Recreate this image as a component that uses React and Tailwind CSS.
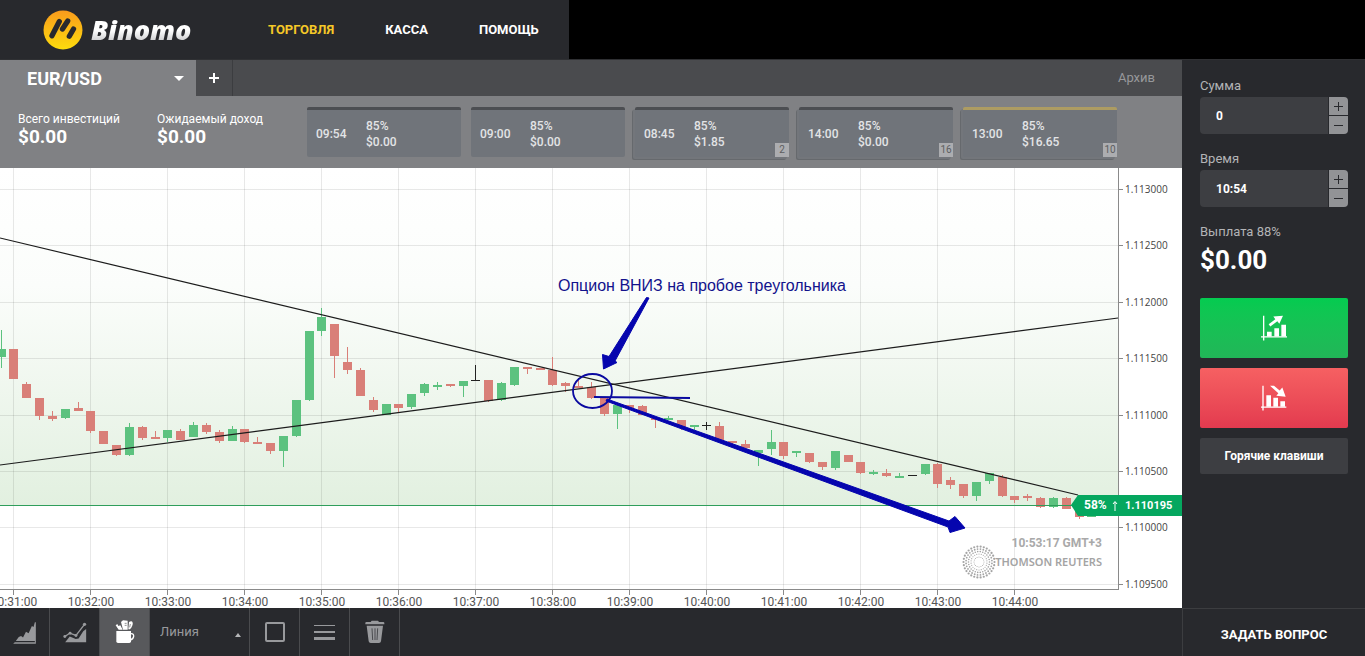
import React, { useState } from 'react';
import clsx from 'clsx';

const NAV = ['Торговля', 'Касса', 'Помощь'];

const DEALS = [
  { time: '09:54', rate: '85%', sum: '$0.00' },
  { time: '09:00', rate: '85%', sum: '$0.00' },
  { time: '08:45', rate: '85%', sum: '$1.85', count: 2 },
  { time: '14:00', rate: '85%', sum: '$0.00', count: 16 },
  { time: '13:00', rate: '85%', sum: '$16.65', count: 10, highlighted: true }
];

// [direction, body top, body bottom, wick top, wick bottom], one entry per 10 seconds
const CANDLES = [
  ['up', 349, 357, 330, 368],
  ['down', 349, 379, 349, 379],
  ['down', 384, 398, 382, 398],
  ['down', 398, 416, 398, 420],
  ['down', 416, 419, 411, 421],
  ['up', 409, 418, 409, 419],
  ['down', 408, 411, 402, 411],
  ['down', 411, 431, 411, 433],
  ['down', 431, 444, 431, 444],
  ['down', 445, 455, 445, 456],
  ['up', 427, 455, 423, 456],
  ['down', 427, 438, 426, 440],
  ['down', 437, 439, 431, 439],
  ['up', 430, 438, 430, 442],
  ['down', 431, 440, 429, 440],
  ['up', 425, 437, 422, 437],
  ['down', 425, 432, 423, 434],
  ['down', 432, 441, 430, 443],
  ['up', 429, 441, 426, 441],
  ['down', 429, 442, 429, 443],
  ['down', 442, 444, 437, 444],
  ['down', 443, 451, 443, 454],
  ['up', 436, 451, 436, 467],
  ['up', 400, 436, 400, 437],
  ['up', 331, 400, 331, 401],
  ['up', 317, 331, 308, 336],
  ['down', 324, 356, 324, 378],
  ['down', 362, 370, 347, 374],
  ['down', 370, 396, 368, 396],
  ['down', 400, 410, 397, 412],
  ['up', 404, 415, 404, 415],
  ['down', 404, 408, 404, 412],
  ['up', 394, 407, 394, 409],
  ['up', 384, 393, 383, 396],
  ['up', 385, 387, 382, 390],
  ['down', 384, 386, 384, 387],
  ['up', 381, 386, 381, 397],
  ['flat', 380, 381, 365, 381],
  ['down', 380, 401, 380, 402],
  ['up', 383, 400, 382, 401],
  ['up', 367, 385, 367, 386],
  ['down', 367, 369, 367, 374],
  ['down', 368, 370, 368, 370],
  ['down', 370, 385, 357, 386],
  ['down', 383, 386, 382, 392],
  ['down', 386, 388, 378, 388],
  ['down', 387, 398, 382, 399],
  ['down', 398, 414, 398, 416],
  ['up', 405, 414, 405, 429],
  ['down', 405, 408, 405, 413],
  ['down', 406, 415, 405, 415],
  ['down', 418, 420, 418, 428],
  ['up', 418, 420, 416, 420],
  ['down', 420, 427, 420, 430],
  ['up', 425, 427, 425, 430],
  ['flat', 425, 426, 422, 430],
  ['down', 426, 441, 422, 441],
  ['down', 441, 443, 441, 448],
  ['down', 444, 448, 440, 448],
  ['up', 450, 453, 450, 466],
  ['up', 442, 449, 430, 455],
  ['down', 442, 456, 442, 459],
  ['up', 451, 453, 451, 457],
  ['down', 453, 462, 453, 463],
  ['down', 462, 467, 462, 470],
  ['up', 451, 468, 451, 470],
  ['down', 455, 462, 455, 462],
  ['down', 462, 473, 462, 474],
  ['up', 472, 474, 470, 475],
  ['down', 473, 476, 469, 477],
  ['up', 476, 478, 473, 478],
  ['flat', 475, 476, 475, 476],
  ['up', 464, 474, 464, 475],
  ['down', 464, 484, 463, 488],
  ['down', 480, 485, 477, 489],
  ['down', 484, 496, 484, 498],
  ['up', 482, 496, 482, 501],
  ['up', 473, 481, 473, 484],
  ['down', 477, 496, 475, 497],
  ['down', 496, 500, 496, 503],
  ['down', 496, 498, 494, 501],
  ['down', 498, 507, 497, 508],
  ['up', 498, 507, 497, 508],
  ['down', 498, 509, 497, 509],
  ['down', 509, 517, 509, 519],
  ['up', 515, 517, 515, 517]
];

const CANDLE_COLORS = { up: '#5cc27f', down: '#d97f78', flat: '#222222' };

const PRICES = [
  ['1.113000', 189],
  ['1.112500', 245],
  ['1.112000', 302],
  ['1.111500', 358],
  ['1.111000', 415],
  ['1.110500', 471],
  ['1.110000', 527],
  ['1.109500', 584]
];

const TIMES = [
  '10:31:00', '10:32:00', '10:33:00', '10:34:00', '10:35:00', '10:36:00', '10:37:00',
  '10:38:00', '10:39:00', '10:40:00', '10:41:00', '10:42:00', '10:43:00', '10:44:00'
];

const Logo = () => (
  <a href="#" className="flex items-center gap-2">
    <svg viewBox="44 11 38 38" className="size-10" aria-hidden="true">
      <defs>
        <linearGradient id="coin" x1="0" y1="0" x2="0" y2="1">
          <stop offset="0" stopColor="#f99b1c" />
          <stop offset="1" stopColor="#fddc0d" />
        </linearGradient>
      </defs>
      <circle cx="63" cy="30" r="18.5" fill="url(#coin)" />
      <g stroke="#28292d" strokeWidth="5" strokeLinecap="round">
        <path d="M52.500 35.500L59.500 22" />
        <path d="M62.500 29L67.500 21.500" />
        <path d="M69 36L73 29" />
      </g>
    </svg>
    <span className="bg-linear-to-b from-white from-50% to-[#b9babd] bg-clip-text pr-1 font-['Open_Sans',sans-serif] text-[27px] leading-8 font-extrabold text-transparent italic">
      Binomo
    </span>
  </a>
);

const Header = () => (
  <header className="flex h-15 border-b border-[#2f3033] bg-black">
    <div className="flex w-[569px] items-center bg-[#28292d] pl-[43px]">
      <div className="w-[225px]">
        <Logo />
      </div>
      <nav className="flex gap-[51px] text-[13px] font-bold text-white uppercase">
        {NAV.map((item, i) => (
          <a key={item} href="#" className={clsx(i === 0 && 'text-[#f5c827]')}>{item}</a>
        ))}
      </nav>
    </div>
  </header>
);

const AssetTabs = () => (
  <div className="flex h-9 items-stretch bg-[#4a4b4e] text-white">
    <button className="flex w-[196px] items-center justify-between bg-[#808184] pr-3 pl-[27px] text-[18px] font-bold">
      EUR/USD
      <svg viewBox="0 0 10 5" className="h-[5px] w-2.5" fill="currentColor" aria-hidden="true">
        <path d="M0 0h10L5 5z" />
      </svg>
    </button>
    <button aria-label="Добавить актив" className="flex w-[37px] items-center justify-center border-r border-[#3c3d40]">
      <svg viewBox="0 0 10 10" className="size-2.5" stroke="currentColor" strokeWidth="2" aria-hidden="true">
        <path d="M5 0v10M0 5h10" />
      </svg>
    </button>
    <a href="#" className="ml-auto self-center pr-[27px] text-[13px] text-[#97989b]">Архив</a>
  </div>
);

const Stat = ({ label, value }) => (
  <div>
    <div className="text-[12px] leading-4">{label}</div>
    <div className="text-[19px] leading-5 font-bold">{value}</div>
  </div>
);

const DealCard = ({ deal }) => (
  <button
    className={clsx(
      'relative flex h-[50px] flex-1 items-center rounded-xs border-t-3 bg-[#70747a] pl-[9px] text-left text-[12px] font-medium text-[#e3e4e6]',
      deal.highlighted ? 'border-[#ad9c62]' : 'border-[#4c4e52]',
      deal.count && 'shadow-[-2px_2px_0_#73767b,-3px_3px_0_#66696d]'
    )}
  >
    <span className="w-[50px]">{deal.time}</span>
    <span className="leading-4">
      {deal.rate}
      <br />
      {deal.sum}
    </span>
    {deal.count && (
      <span className="absolute right-0 bottom-0 h-3.5 min-w-3.5 bg-[#acadb0] px-px text-center text-[10px] leading-3.5 font-normal text-[#5c5d60]">
        {deal.count}
      </span>
    )}
  </button>
);

const StatsPanel = () => (
  <div className="flex h-[72px] items-start bg-[#808184] pt-[11px] pr-[65px] text-white">
    <div className="flex w-[307px] shrink-0 pt-1 pl-[18px]">
      <div className="w-[139px]">
        <Stat label="Всего инвестиций" value="$0.00" />
      </div>
      <Stat label="Ожидаемый доход" value="$0.00" />
    </div>
    <div className="flex flex-1 gap-2.5">
      {DEALS.map((deal) => (
        <DealCard key={deal.time} deal={deal} />
      ))}
    </div>
  </div>
);

const Candle = ({ candle, index }) => {
  const [kind, top, bottom, high, low] = candle;
  const x = Math.round(0.5 + (index * 77) / 6);
  const color = CANDLE_COLORS[kind];
  return (
    <g fill={color}>
      <rect x={x} y={high} width="1" height={low - high} />
      <rect x={x - 4} y={top} width="9" height={bottom - top} />
    </g>
  );
};

// Rings of dots that grow towards the outside
const DottedSun = () => {
  const rings = [[5, 16, 0.5], [8, 22, 0.6], [10.5, 26, 0.8], [13, 28, 0.9], [15.5, 30, 1.1]];
  return (
    <g fill="#a4a4a4">
      {rings.map(([r, n, size], ring) =>
        Array.from({ length: n }, (_, i) => {
          const a = ((i + (ring % 2) / 2) / n) * Math.PI * 2;
          return <circle key={`${r}-${i}`} cx={979 + r * Math.cos(a)} cy={562 + r * Math.sin(a)} r={size} />;
        })
      )}
    </g>
  );
};

const Chart = () => (
  <svg viewBox="0 168 1182 440" className="block w-full bg-white" role="img" aria-label="EUR/USD">
    <defs>
      <linearGradient id="area" x1="0" y1="0" x2="0" y2="1">
        <stop offset="0" stopColor="#ffffff" />
        <stop offset="0.35" stopColor="#fbfdfb" />
        <stop offset="1" stopColor="#e2f0e0" />
      </linearGradient>
    </defs>
    <rect x="0" y="168" width="1118" height="337" fill="url(#area)" />

    <g fill="#000000" fillOpacity="0.09">
      {PRICES.map(([price, y]) => (
        <rect key={price} x="0" y={y} width="1118" height="1" />
      ))}
      {TIMES.map((time, i) => (
        <rect key={time} x={13 + i * 77} y="168" width="1" height="421" />
      ))}
    </g>

    <g fill="#8a8a8a">
      <rect x="1118" y="168" width="1" height="422" />
      <rect x="0" y="589" width="1119" height="1" />
      {PRICES.map(([price, y]) => (
        <rect key={price} x="1118" y={y} width="5" height="1" />
      ))}
      {TIMES.map((time, i) => (
        <rect key={time} x={13 + i * 77} y="590" width="1" height="5" />
      ))}
    </g>
    <g className="font-['Open_Sans',sans-serif] text-[10px]" fill="#444444">
      {PRICES.map(([price, y]) => (
        <text key={price} x="1125" y={y + 4}>{price}</text>
      ))}
    </g>
    <g className="text-[12px]" fill="#555555" textAnchor="middle">
      {TIMES.map((time, i) => (
        <text key={time} x={14 + i * 77} y="606">{time}</text>
      ))}
    </g>

    {CANDLES.map((candle, i) => (
      <Candle key={i} candle={candle} index={i} />
    ))}
    <rect x="0" y="505" width="1075" height="1" fill="#2f9e5b" />

    <g stroke="#1c1c1c" strokeWidth="1.2">
      <path d="M0 238L1078 495" />
      <path d="M0 465L1118 318" />
    </g>

    {/* Price tag */}
    <path d="M1071 505l7-10h104v21h-104z" fill="#05a75f" />
    <g fill="#ffffff" className="font-bold">
      <text x="1084" y="509" className="text-[12px]">58%</text>
      <path d="M1115 511v-9M1113 504l2-2.500l2 2.500" fill="none" stroke="#ffffff" />
      <text x="1125" y="509" className="text-[11px]">1.110195</text>
    </g>

    {/* Data source */}
    <text x="1102" y="547" textAnchor="end" fill="#a9a9a9" className="text-[12px] font-bold">10:53:17 GMT+3</text>
    <DottedSun />
    <text x="1102" y="566" textAnchor="end" fill="#a4a4a4" className="font-['Noto_Sans',sans-serif] text-[11px] font-semibold">
      THOMSON REUTERS
    </text>

    {/* Hand-drawn notes */}
    <text x="558" y="291" fill="#12128c" className="font-['Liberation_Sans',sans-serif] text-[16px]">
      Опцион ВНИЗ на пробое треугольника
    </text>
    <g fill="none" stroke="#0a0aa0">
      <ellipse cx="592.500" cy="391" rx="19.500" ry="17" strokeWidth="1.800" />
      <path d="M594 397L690 398" strokeWidth="2" />
    </g>
    <g fill="#0505ae" stroke="#0505ae" strokeLinejoin="round">
      <path d="M646.500 297.500L649 298L615 361L617 362.500L603.500 369L602.500 354.500L609 356.500z" />
      <path d="M607 399L949 521L955 516.500L965 528L950 532.500L948 527L606 401z" />
    </g>
  </svg>
);

const ToolButton = ({ label, active, children }) => (
  <button
    aria-label={label}
    className={clsx(
      'flex w-[50px] items-center justify-center border-r border-[#4a4b4e]',
      active ? 'bg-[#58595c] text-white' : 'text-[#98999c]'
    )}
  >
    {children}
  </button>
);

const Toolbar = () => (
  <div className="flex h-12 shrink-0 items-stretch bg-[#28292d]">
    <ToolButton label="Тип графика">
      <svg viewBox="38 126 72 70" className="h-[23px] w-6" fill="currentColor" aria-hidden="true">
        <path d="M46 187l9-12 7-3 6 4 9-17 8 4 10-22 5 3 4-14h3v65H38l5-4h61v-4z" />
      </svg>
    </ToolButton>
    <ToolButton label="Индикаторы">
      <svg viewBox="188 130 72 64" className="h-[21px] w-6" fill="currentColor" aria-hidden="true">
        <path d="M193 174l15-10 19 7 26-34" fill="none" stroke="currentColor" strokeWidth="4" />
        <circle cx="193" cy="174" r="4.500" />
        <circle cx="209" cy="164" r="4.500" />
        <circle cx="227" cy="171" r="4.500" />
        <circle cx="253" cy="137" r="5" />
        <path d="M194 192l14-18 18 8 9-2 14-22 9-7v41z" />
      </svg>
    </ToolButton>
    <ToolButton label="Инструменты рисования" active>
      <svg viewBox="344 126 60 72" className="h-6 w-5" fill="currentColor" aria-hidden="true">
        <path d="M348 159h44v31q0 5-5 5h-34q-5 0-5-5z" />
        <path d="M391 167q10-1 9 8t-11 11" fill="none" stroke="currentColor" strokeWidth="4" />
        <path d="M346 142l5-4 3 6 6-2 7 13h-12zM362 132l6-5 14 1v27h-14z" />
        <path d="M384 154l2-22q9-5 11 2t-8 20z" />
        <path d="M373 136h6M373 142h6M390 138l-2 10" stroke="#58595c" strokeWidth="2" />
      </svg>
    </ToolButton>
    <div className="relative w-[100px] border-r border-[#4a4b4e]">
      <select aria-label="Инструмент" className="h-full w-full appearance-none bg-[#28292d] pl-2.5 text-[13px] text-[#98999c]">
        <option>Линия</option>
      </select>
      <svg viewBox="0 0 6 4" className="pointer-events-none absolute top-[25px] right-2 h-1 w-1.5" fill="#b5b6b8" aria-hidden="true">
        <path d="M0 4l3-4 3 4z" />
      </svg>
    </div>
    <ToolButton label="Цвет">
      <svg viewBox="0 0 20 20" className="size-5" fill="none" stroke="currentColor" strokeWidth="2" aria-hidden="true">
        <rect x="1" y="1" width="18" height="18" rx="1" />
      </svg>
    </ToolButton>
    <ToolButton label="Толщина линии">
      <svg viewBox="0 0 21 17" className="h-[17px] w-[21px]" fill="currentColor" aria-hidden="true">
        <path d="M0 1h21v1H0zM0 7h21v2H0zM0 13h21v3H0z" />
      </svg>
    </ToolButton>
    <ToolButton label="Удалить">
      <svg viewBox="1094 126 60 72" className="h-6 w-5" aria-hidden="true">
        <path d="M1095 135q0-3 3-3h13l3-4h19l3 4h13q3 0 3 3v4h-57zM1099 143h49l-6 47q-1 5-6 5h-25q-5 0-6-5z" fill="currentColor" />
        <path d="M1115 151l2 35M1124 151v35M1132 151l-2 35" stroke="#3a3b3f" strokeWidth="2.500" />
      </svg>
    </ToolButton>
  </div>
);

const StepButton = ({ label, minus }) => (
  <button aria-label={label} className="flex flex-1 items-center justify-center bg-[#929396] text-[#28292d]">
    <svg viewBox="0 0 9 9" className="size-[9px]" stroke="currentColor" aria-hidden="true">
      <path d={minus ? 'M0 4.500h9' : 'M0 4.500h9M4.500 0v9'} />
    </svg>
  </button>
);

const StepField = ({ id, label, value, onChange }) => (
  <div className="pb-[15px]">
    <label htmlFor={id} className="block h-[21px] text-[13px] leading-5 text-[#b3b4b6]">{label}</label>
    <div className="flex h-[37px] gap-px overflow-hidden rounded-sm">
      <input
        id={id}
        type="text"
        value={value}
        onChange={(e) => onChange(e.target.value)}
        className="min-w-0 flex-1 bg-[#3d3e42] pt-px pl-4 text-[12px] font-bold text-white focus:outline-none"
      />
      <div className="flex w-[19px] flex-col gap-px">
        <StepButton label={`${label}: больше`} />
        <StepButton label={`${label}: меньше`} minus />
      </div>
    </div>
  </div>
);

const TradePanel = () => {
  const [amount, setAmount] = useState('0');
  const [time, setTime] = useState('10:54');

  return (
    <aside className="flex w-[183px] shrink-0 flex-col bg-[#28292d] text-white">
      <div className="flex-1 pt-4 pr-[17px] pl-[18px]">
        <StepField id="amount" label="Сумма" value={amount} onChange={setAmount} />
        <StepField id="time" label="Время" value={time} onChange={setTime} />
        <div className="text-[13px] leading-5 text-[#b3b4b6]">Выплата 88%</div>
        <div className="mb-5 text-[26px] leading-9 font-bold">$0.00</div>
        <button
          aria-label="Вверх"
          className="mb-2.5 flex h-15 w-full items-center justify-center rounded-xs bg-linear-to-b from-[#04cb50] to-[#21b658]"
        >
          <svg viewBox="273 100 78 77" className="size-[26px]" fill="currentColor" aria-hidden="true">
            <path d="M279 102h4v74h-4zM273 163h78v4h-78z" />
            <path d="M291 150h14v14h-14zM313 139h14v25h-14zM334 129h14v35h-14z" />
            <path d="M296 127l20-15-6-8 29-2-11 24-6-8-21 16z" />
          </svg>
        </button>
        <button
          aria-label="Вниз"
          className="mb-2.5 flex h-15 w-full items-center justify-center rounded-xs bg-linear-to-b from-[#f66062] to-[#e33a4f]"
        >
          <svg viewBox="273 310 78 77" className="size-[26px]" fill="currentColor" aria-hidden="true">
            <path d="M277 312h4v74h-4zM273 374h76v4h-76z" />
            <path d="M289 340h14v35h-14zM310 348h14v27h-14zM331 358h14v17h-14z" />
            <path d="M300 312h12l17 14 8-9 10 28-28-3 6-8z" />
          </svg>
        </button>
        <button className="h-9 w-full rounded-xs bg-[#3d3e42] text-[12px] font-bold">Горячие клавиши</button>
      </div>
      <button className="h-12 border-t border-l border-[#3c3d40] pt-1 text-[13px] font-bold uppercase">Задать вопрос</button>
    </aside>
  );
};

const App = () => (
  <div className="flex min-h-screen flex-col bg-[#28292d] font-[Roboto,sans-serif]">
    <Header />
    <div className="flex flex-1">
      <main className="flex min-w-0 flex-1 flex-col">
        <AssetTabs />
        <StatsPanel />
        <Chart />
        <Toolbar />
      </main>
      <TradePanel />
    </div>
  </div>
);

export default App;
